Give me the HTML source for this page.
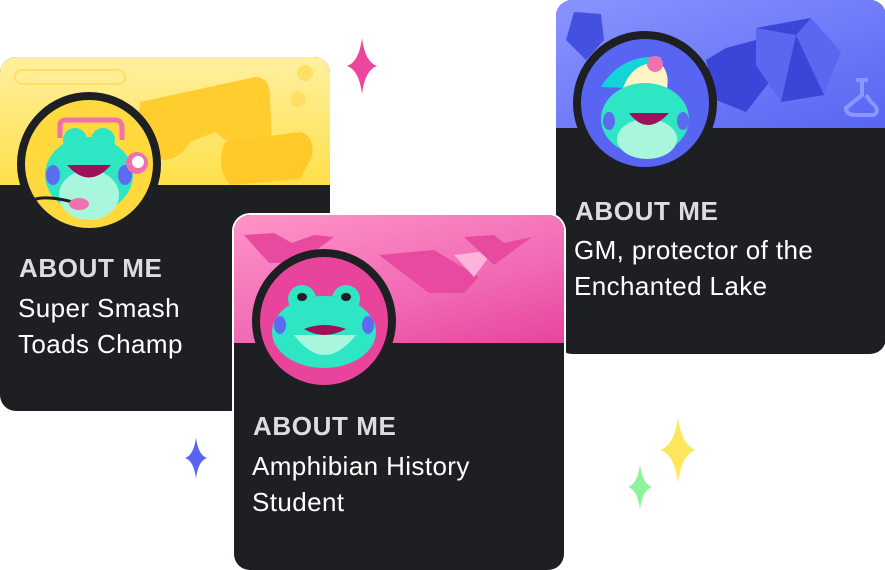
<!DOCTYPE html>
<html><head><meta charset="utf-8"><style>
body{margin:0;width:885px;height:570px;background:#fff;position:relative;overflow:hidden;font-family:"Liberation Sans",sans-serif}
.card{position:absolute;width:330px;background:#1e1f22;border-radius:16px;overflow:hidden}
.ban{position:absolute;left:0;top:0;width:100%;height:128px}
.av{position:absolute;width:128px;height:128px;border-radius:50%;border:8px solid #1e1f22;overflow:hidden}
.h{position:absolute;color:#dbdee1;font-weight:bold;font-size:26px;letter-spacing:.6px}
.t{position:absolute;color:#fff;font-size:26px;line-height:36px;letter-spacing:.4px}
.sp{position:absolute}
</style></head><body>

<div class="card" style="left:0;top:57px;height:354px;z-index:1">
 <div class="ban" style="background:linear-gradient(180deg,#fff0a0,#ffe04a)">
  <div style="position:absolute;left:14px;top:12px;width:108px;height:12px;border:2px solid #ffe065;border-radius:8px"></div>
  <svg width="330" height="128" style="position:absolute;left:0;top:0">
   <path d="M140 45 L255 20 Q270 20 270 40 L272 90 Q260 105 235 90 L215 75 L190 85 Q175 110 150 100 Q135 80 140 45Z" fill="#ffcd2e"/>
   <path d="M225 85 L300 75 Q315 78 312 100 L300 122 L230 128 Q215 110 225 85Z" fill="#ffc92a"/>
   <circle cx="305" cy="16" r="8" fill="#ffe065"/><circle cx="298" cy="42" r="8" fill="#ffe065"/>
  </svg>
 </div>
 <div class="av" style="left:17px;top:35px;background:#ffd93d">
  <svg width="128" height="128" viewBox="0 0 128 128">
   <path d="M35 38 L35 25 Q35 20 42 20 L90 20 Q97 20 97 28 L97 40" stroke="#f070b0" stroke-width="5" fill="none"/>
   <ellipse cx="64" cy="75" rx="44" ry="38" fill="#2ee6c4"/>
   <ellipse cx="50" cy="40" rx="12" ry="12" fill="#2ee6c4"/><ellipse cx="78" cy="40" rx="12" ry="12" fill="#2ee6c4"/>
   <ellipse cx="64" cy="95" rx="30" ry="25" fill="#a8f7dc"/>
   <path d="M42 65 Q64 90 86 65Z" fill="#a0105a"/>
   <ellipse cx="28" cy="75" rx="7" ry="10" fill="#5b6cf0"/><ellipse cx="100" cy="75" rx="7" ry="10" fill="#5b6cf0"/>
   <circle cx="112" cy="63" r="11" fill="#f070b0"/><circle cx="113" cy="62" r="6" fill="#fff"/>
   <path d="M8 100 Q20 95 48 102" stroke="#1e1f22" stroke-width="3" fill="none"/><ellipse cx="54" cy="104" rx="10" ry="6" fill="#f070b0"/>
  </svg>
 </div>
 <div class="h" style="left:19px;top:196px">ABOUT ME</div>
 <div class="t" style="left:18px;top:233px">Super Smash<br>Toads Champ</div>
</div>

<div class="card" style="left:556px;top:0;height:354px;z-index:2">
 <div class="ban" style="background:linear-gradient(160deg,#8a94ff,#5865f2)">
  <svg width="330" height="128" style="position:absolute;left:0;top:0">
   <path d="M18 12 L45 14 L48 40 L30 60 L10 40Z" fill="#4450e0"/>
   <path d="M170 48 L200 40 L215 80 L190 112 L160 100 L150 60Z" fill="#3b46d8"/>
   <path d="M200 28 L255 18 L285 52 L268 95 L225 102 L200 65Z" fill="#5a67f0"/>
   <path d="M200 28 L240 35 L255 18Z M225 102 L240 35 L268 95Z" fill="#3b46d8"/>
   <path d="M300 80 L312 80 M306 80 L306 95 L290 108 Q290 115 300 115 L318 115 Q325 110 315 102 L310 95" stroke="#8c96ff" stroke-width="4" fill="none"/>
  </svg>
 </div>
 <div class="av" style="left:17px;top:31px;background:#5865f2">
  <svg width="128" height="128" viewBox="0 0 128 128">
   <path d="M20 48 Q40 15 80 18 L70 50Z" fill="#14d4d8"/>
   <path d="M40 55 Q50 20 80 25 Q90 35 85 55Z" fill="#fff4c4"/>
   <circle cx="74" cy="25" r="8" fill="#f070b0"/>
   <ellipse cx="64" cy="80" rx="44" ry="36" fill="#2ee6c4"/>
   <ellipse cx="66" cy="100" rx="30" ry="20" fill="#a8f7dc"/>
   <path d="M48 74 Q66 98 88 74Z" fill="#a0105a"/>
   <ellipse cx="28" cy="82" rx="6" ry="9" fill="#5b6cf0"/><ellipse cx="102" cy="82" rx="6" ry="9" fill="#5b6cf0"/>
  </svg>
 </div>
 <div class="h" style="left:19px;top:196px">ABOUT ME</div>
 <div class="t" style="left:18px;top:232px">GM, protector of the<br>Enchanted Lake</div>
</div>

<div class="card" style="left:234px;top:215px;height:355px;z-index:3;box-shadow:0 0 0 2px #fff">
 <div class="ban" style="background:linear-gradient(165deg,#ff94c8,#f06ab4 60%,#e8449c)">
  <svg width="330" height="128" style="position:absolute;left:0;top:0">
   <path d="M10 20 L40 18 L58 28 L80 20 L100 22 L65 48 L35 48Z" fill="#e84aa0"/>
   <path d="M145 40 L200 35 L245 62 L230 78 L195 78Z" fill="#e84aa0"/>
   <path d="M220 40 L260 35 L240 62Z" fill="#ffb3da"/>
   <path d="M230 22 L260 20 L270 28 L298 22 L260 50Z" fill="#e84aa0"/>
  </svg>
 </div>
 <div class="av" style="left:18px;top:34px;background:#e8449c">
  <svg width="128" height="128" viewBox="0 0 128 128">
   <ellipse cx="42" cy="42" rx="14" ry="14" fill="#2ee6c4"/><ellipse cx="86" cy="42" rx="14" ry="14" fill="#2ee6c4"/>
   <ellipse cx="64" cy="75" rx="52" ry="36" fill="#2ee6c4"/>
   <ellipse cx="42" cy="40" rx="5" ry="4" fill="#1e1f22"/><ellipse cx="86" cy="40" rx="5" ry="4" fill="#1e1f22"/>
   <path d="M34 78 Q64 118 96 78Z" fill="#a8f7dc"/>
   <path d="M44 72 Q64 84 86 72 Q64 64 44 72Z" fill="#a0105a"/>
   <ellipse cx="20" cy="68" rx="6" ry="9" fill="#5b6cf0"/><ellipse cx="108" cy="68" rx="6" ry="9" fill="#5b6cf0"/>
  </svg>
 </div>
 <div class="h" style="left:19px;top:196px">ABOUT ME</div>
 <div class="t" style="left:18px;top:233px">Amphibian History<br>Student</div>
</div>

<svg class="sp" style="left:347px;top:38px" width="30" height="56" viewBox="0 0 30 56"><path d="M15 0 Q18 24 30 28 Q18 32 15 56 Q12 32 0 28 Q12 24 15 0Z" fill="#eb459e"/></svg>
<svg class="sp" style="left:185px;top:436px" width="22" height="44" viewBox="0 0 30 56"><path d="M15 0 Q18 24 30 28 Q18 32 15 56 Q12 32 0 28 Q12 24 15 0Z" fill="#5865f2"/></svg>
<svg class="sp" style="left:660px;top:417px" width="36" height="66" viewBox="0 0 30 56"><path d="M15 0 Q18 24 30 28 Q18 32 15 56 Q12 32 0 28 Q12 24 15 0Z" fill="#fee75c"/></svg>
<svg class="sp" style="left:628px;top:464px" width="24" height="46" viewBox="0 0 30 56"><path d="M15 0 Q18 24 30 28 Q18 32 15 56 Q12 32 0 28 Q12 24 15 0Z" fill="#8ef29a"/></svg>
</body></html>
